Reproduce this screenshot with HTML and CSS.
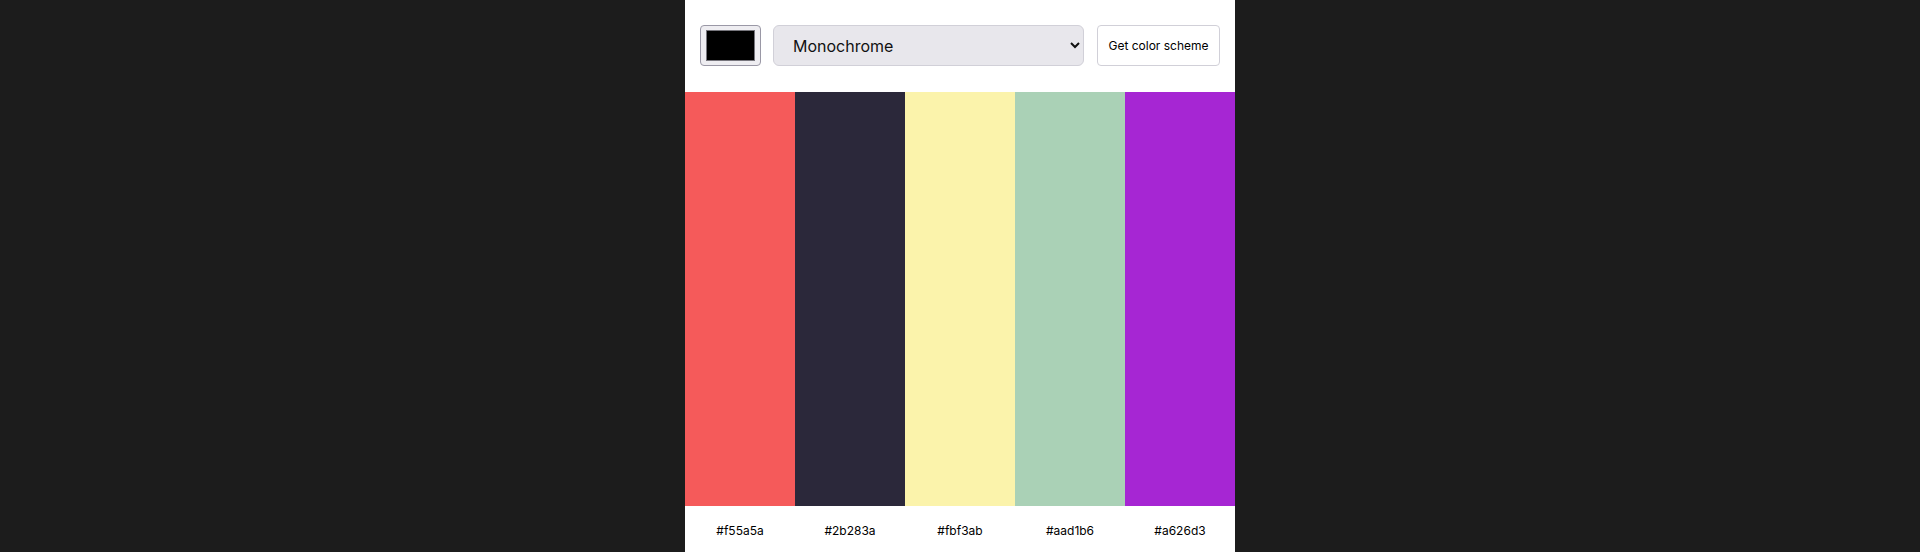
FILE: index.html
```html
<!DOCTYPE html>
<html>
<head>
<meta charset="utf-8">
<link rel="stylesheet" href="styles.css">
</head>
<body>
<main class="app">
  <header class="controls">
    <input class="seed" type="color" value="#000000">
    <select class="mode">
      <option>Monochrome</option>
      <option>Monochrome-dark</option>
      <option>Monochrome-light</option>
      <option>Analogic</option>
      <option>Complement</option>
    </select>
    <button class="get">Get color scheme</button>
  </header>
  <section class="palette">
    <div class="swatch" style="background:#f55a5a"></div>
    <div class="swatch" style="background:#2b283a"></div>
    <div class="swatch" style="background:#fbf3ab"></div>
    <div class="swatch" style="background:#aad1b6"></div>
    <div class="swatch" style="background:#a626d3"></div>
  </section>
  <footer class="codes">
    <span>#f55a5a</span>
    <span>#2b283a</span>
    <span>#fbf3ab</span>
    <span>#aad1b6</span>
    <span>#a626d3</span>
  </footer>
</main>
</body>
</html>
```
FILE: styles.css
```css
html, body {
  margin: 0;
  padding: 0;
  background: #1c1c1c;
  font-family: Inter, "Noto Sans", sans-serif;
}
.app {
  width: 550px;
  margin: 0 auto;
  background: #ffffff;
}
.controls {
  display: flex;
  align-items: center;
  gap: 12px;
  padding: 25px 15px 26px;
  height: 41px;
}
.seed {
  width: 61px;
  height: 41px;
  box-sizing: border-box;
  border: 1px solid #9a98a6;
  border-radius: 4px;
  background: #eeedf1;
  padding: 4px 5px;
  margin: 0;
  cursor: pointer;
}
.seed::-webkit-color-swatch-wrapper {
  padding: 0;
}
.seed::-webkit-color-swatch {
  border: 1px solid #77767d;
}
.mode {
  flex: 0 0 311px;
  height: 41px;
  box-sizing: border-box;
  border: 1px solid #d1d0d8;
  border-radius: 6px;
  background-color: #e8e7ec;
  color: #111;
  font-family: Inter, sans-serif;
  font-size: 16px;
  padding: 0 12px 0 15px;
  margin: 0;
}
.get {
  margin-left: 1px;
  width: 123px;
  height: 41px;
  box-sizing: border-box;
  border: 1px solid #d1d0d8;
  border-radius: 4px;
  background: #ffffff;
  color: #000;
  font-family: Inter, sans-serif;
  font-size: 12px;
  font-weight: 400;
  padding: 0;
  cursor: pointer;
}
.palette {
  display: grid;
  grid-template-columns: repeat(5, 1fr);
  height: 414px;
}
.codes {
  display: grid;
  grid-template-columns: repeat(5, 1fr);
  height: 48px;
  align-items: center;
  text-align: center;
  font-size: 12px;
  font-weight: 400;
  color: #000;
}
```
